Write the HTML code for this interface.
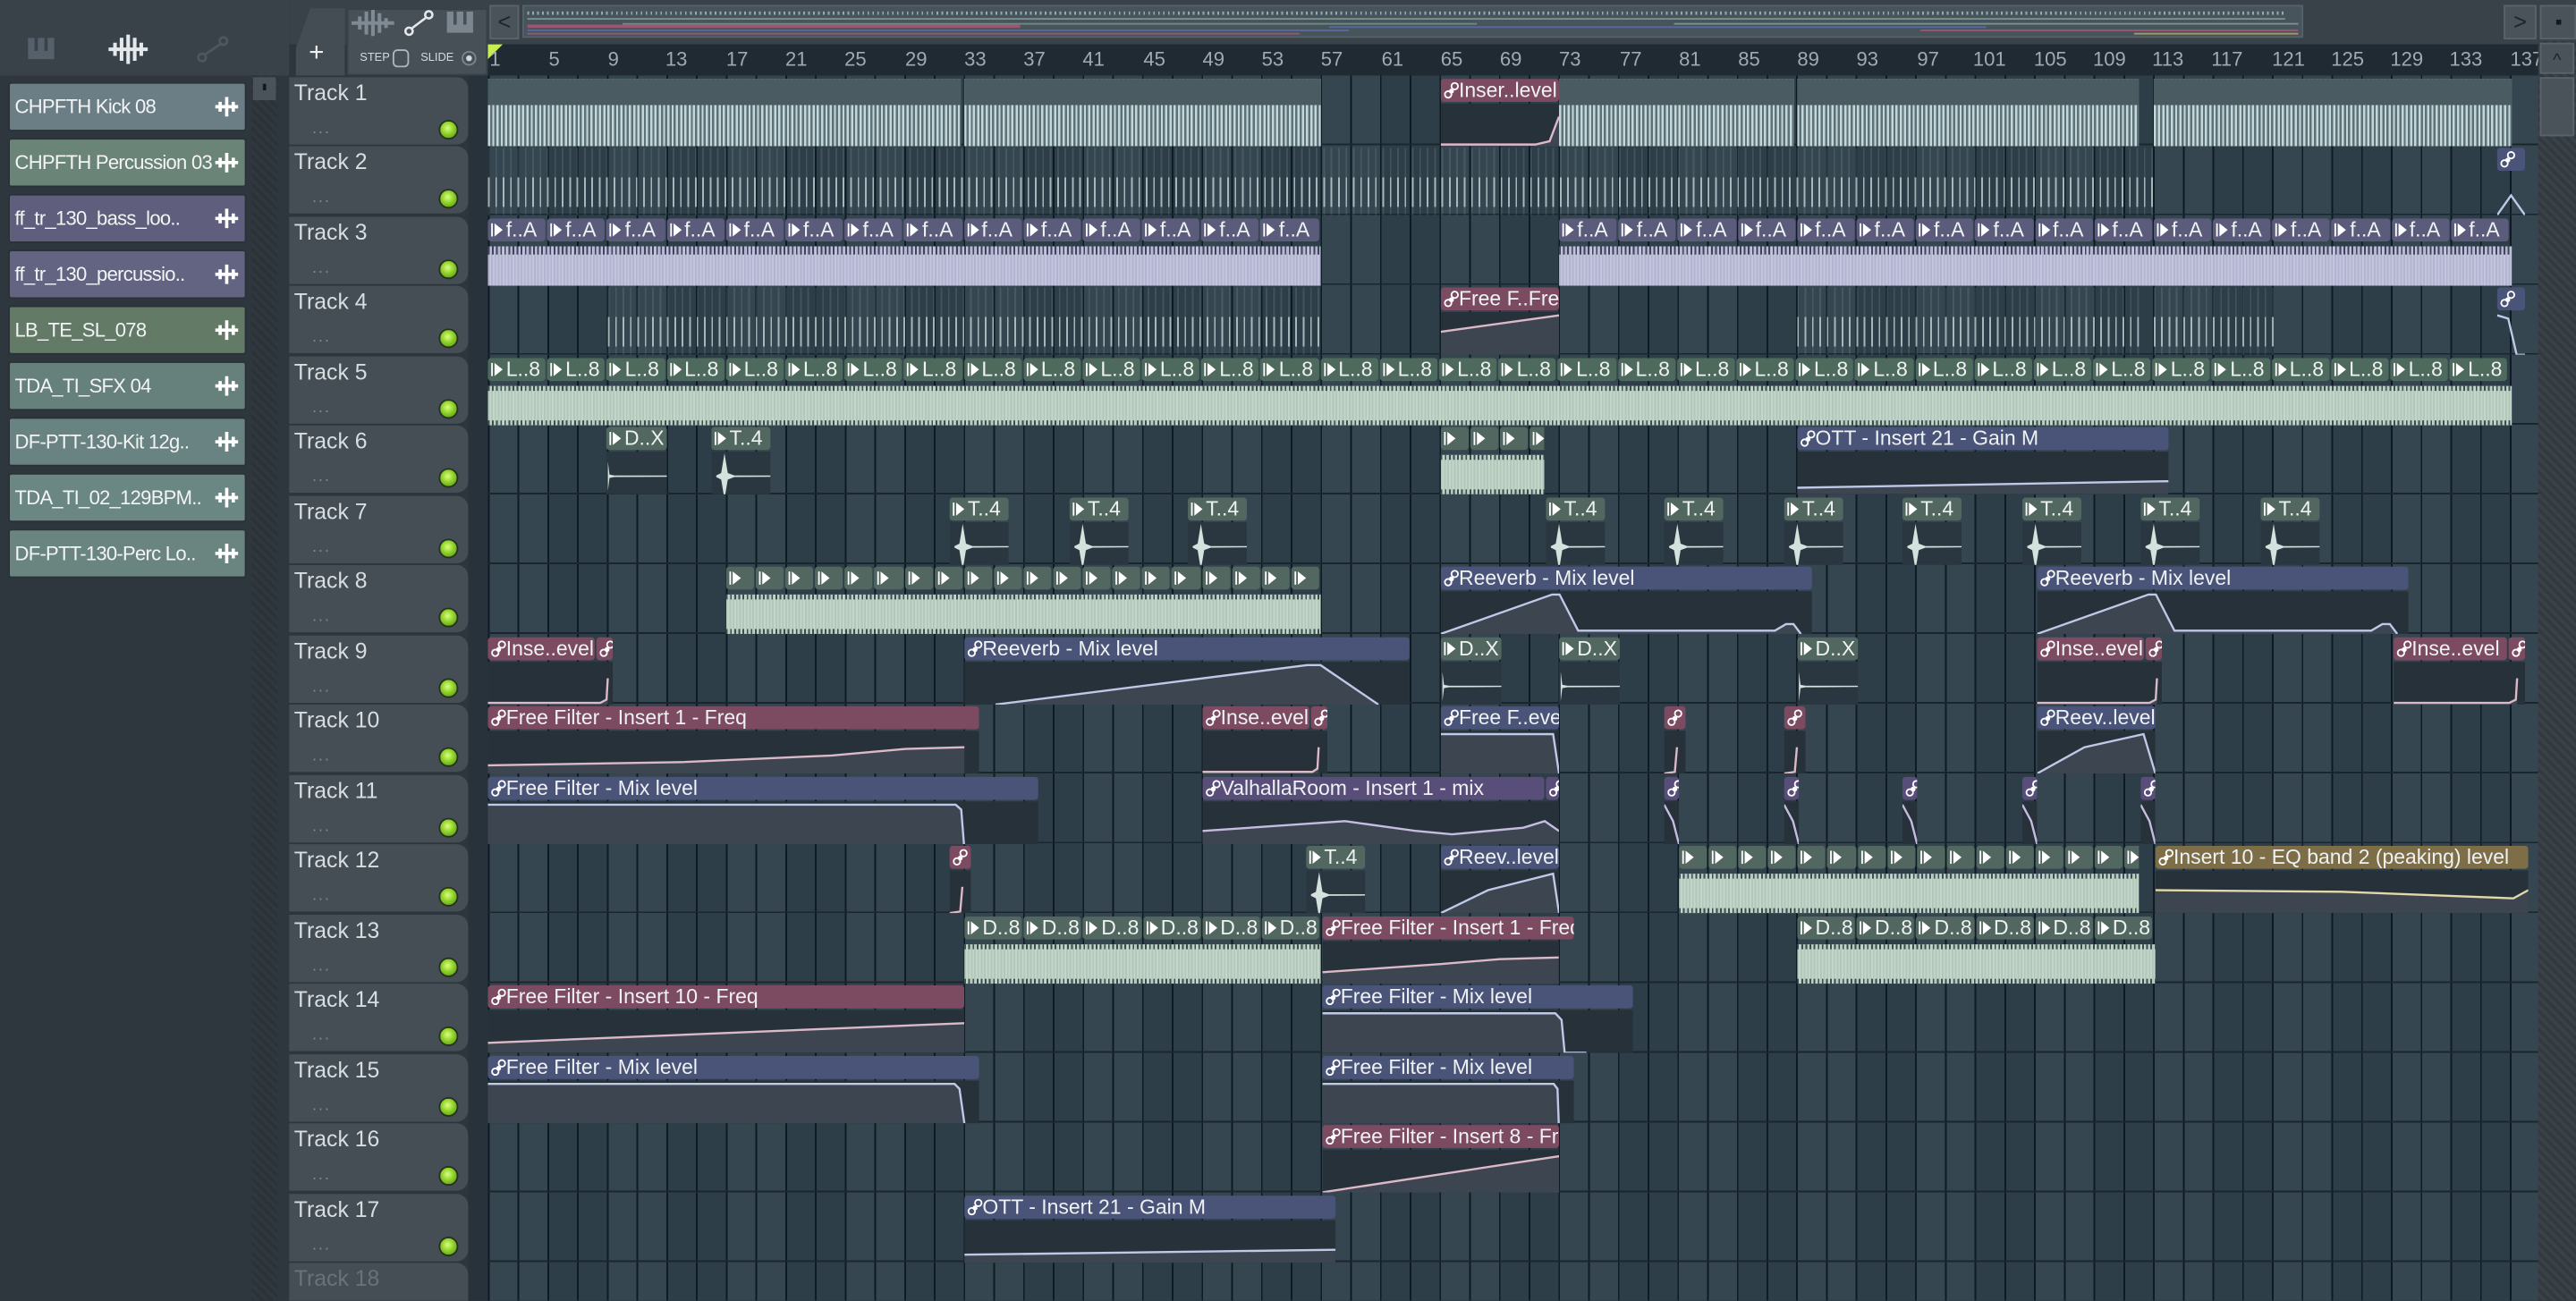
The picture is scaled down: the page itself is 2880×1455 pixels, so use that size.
<!DOCTYPE html>
<html><head><meta charset="utf-8">
<style>
html,body{margin:0;padding:0;width:2880px;height:1454px;overflow:hidden;background:#2e363d}
#s{position:absolute;left:0;top:0;width:1568px;height:792px;transform:scale(1.8367);transform-origin:0 0;overflow:hidden;background:#2e363d;font-family:"Liberation Sans Narrow","Liberation Sans",sans-serif}
.ab{position:absolute}
.grid{position:absolute;left:297px;top:46px;width:1248px;height:746px;
background:
repeating-linear-gradient(to bottom,transparent 0 41.5px,#1a252e 41.5px 42.5px),
repeating-linear-gradient(to right,#0f1b24 0 1px,transparent 1px 18.1px),
repeating-linear-gradient(to right,#354651 0 36.2px,#2e3e49 36.2px 72.4px);}
.c{position:absolute;height:41px;overflow:hidden}
.hd{position:absolute;left:0;right:0;top:0;height:14px;display:flex;gap:1px}
.hd b{flex:none;height:14px;border-radius:2px;font-weight:normal;color:#eef2f3;font-size:12.5px;line-height:14px;padding-left:11px;position:relative;overflow:hidden;white-space:nowrap;box-sizing:border-box;width:35.2px}
.w b{padding-left:12px}
.t::before{content:"";position:absolute;left:4px;top:3px;border-left:5px solid #fff;border-top:4px solid transparent;border-bottom:4px solid transparent}
.t::after{content:"";position:absolute;left:2px;top:3px;width:1px;height:8px;background:#fff}
.a::before{content:"";position:absolute;left:2px;top:7px;width:3px;height:3px;border:1px solid #fff;border-radius:50%}
.a::after{content:"";position:absolute;left:6px;top:2px;width:3px;height:3px;border:1px solid #fff;border-radius:50%;box-shadow:-2px 3px 0 -1px #fff}
.tl{background:#51675f}.gn{background:#4e6a5c}.pu{background:#5b5c7c}
.pk{background:#7c4b61}.bl{background:#4a5479}.vi{background:#594e79}.ol{background:#7d6e48}
.bd{position:absolute;left:0;top:15px;width:100%;height:26px;background:#27313a}
.f{fill:#3d4650}
.s{fill:none;stroke-width:1.3;vector-effect:non-scaling-stroke}
.sp{stroke:#dcb9c9}.sb{stroke:#bfc8e6}.sv{stroke:#c5bde0}.so{stroke:#e3d9a8}
.wg{position:absolute;left:0;right:0;top:17px;bottom:0;background:repeating-linear-gradient(90deg,#b3c8bb 0 1px,#c2d6ca 1px 2px)}
.wg::before,.wg::after{content:"";position:absolute;left:0;right:0;height:3px;background:repeating-linear-gradient(90deg,#3a4d4f 0 1px,transparent 1px 2.5px)}
.wg::before{top:0}.wg::after{bottom:0}
.wp{position:absolute;left:0;right:0;top:17px;bottom:0;background:repeating-linear-gradient(90deg,#b3b4d0 0 1px,#c3c4dd 1px 2px)}
.wp::before{content:"";position:absolute;left:0;right:0;top:0;height:5px;background:repeating-linear-gradient(90deg,#3e4558 0 1px,transparent 1px 2.5px)}
.os{position:absolute;left:0;top:15px;width:100%;height:26px;background:#2b3740}
.os path{fill:#d3e2dd}
.th{position:absolute;left:176px;width:109px;height:41px;background:#454d55;border-radius:0 7px 7px 0}
.th span{position:absolute;left:3px;top:2px;font-size:13.5px;color:#d8dde0}
.th i{position:absolute;left:14px;top:26px;font-style:normal;font-size:10px;color:#7d878e;letter-spacing:1px}
.th u{position:absolute;left:91px;top:26px;width:10px;height:10px;border-radius:50%;background:radial-gradient(circle at 45% 40%,#d9ff7a 0,#8fd12a 45%,#4d8a12 100%);border:1px solid #26331c}
.li{position:absolute;left:5px;width:145px;height:30px;border-radius:2px;box-sizing:border-box;border:1px solid #2a3137;color:#f2f4f5;font-size:12px;letter-spacing:-0.4px;line-height:28px;padding-left:3px;white-space:nowrap;overflow:hidden}
.li svg{position:absolute;right:4px;top:8px}
.rl{position:absolute;top:29px;font-size:12px;color:#9fabb2}
.k1{position:absolute;height:41px;top:47.5px;overflow:hidden;
background:linear-gradient(#4a5c62 0 16px,transparent 16px),repeating-linear-gradient(90deg,#c3d6d8 0 1.3px,#5c7278 1.3px 2.6px)}
.k2{position:absolute;height:41px;overflow:hidden;
background:repeating-linear-gradient(90deg,rgba(150,175,178,.18) 0 1px,transparent 1px 4.5px)}
.k2::after{content:"";position:absolute;left:0;right:0;top:18px;height:18px;background:repeating-linear-gradient(90deg,rgba(210,224,224,.7) 0 1px,transparent 1px 4.5px)}
</style></head><body><div id="s">

<div class="ab" style="left:0;top:0;width:176px;height:46px;background:#3a4249"></div>
<div class="ab" style="left:0;top:46px;width:176px;height:746px;background:#2f373e"></div>
<svg class="ab" style="left:17px;top:23px" width="18" height="14"><rect x="0" y="0" width="16" height="13" fill="#56606a"/><rect x="4" y="0" width="2" height="8" fill="#3a4249"/><rect x="10" y="0" width="2" height="8" fill="#3a4249"/></svg>
<svg class="ab" style="left:66px;top:21px" width="24" height="18"><path d="M0 9H24M4 5v8M8 2v14M12 0v18M16 2v14M20 5v8" stroke="#e4e8ea" stroke-width="2.2"/></svg>
<svg class="ab" style="left:120px;top:22px" width="20" height="16"><circle cx="3" cy="13" r="2.3" fill="none" stroke="#4e575f" stroke-width="1.5"/><circle cx="16" cy="3" r="2.3" fill="none" stroke="#4e575f" stroke-width="1.5"/><path d="M5 11L14 5" stroke="#4e575f" stroke-width="1.5"/></svg>

<div class="li" style="top:50px;background:#6b7e85">CHPFTH Kick 08<svg width="14" height="12"><path d="M0 6H14M3 3v6M7 0v12M11 3v6" stroke="#fff" stroke-width="2"/></svg></div>
<div class="li" style="top:84px;background:#6a8477">CHPFTH Percussion 03<svg width="14" height="12"><path d="M0 6H14M3 3v6M7 0v12M11 3v6" stroke="#fff" stroke-width="2"/></svg></div>
<div class="li" style="top:118px;background:#5f5f7d">ff_tr_130_bass_loo..<svg width="14" height="12"><path d="M0 6H14M3 3v6M7 0v12M11 3v6" stroke="#fff" stroke-width="2"/></svg></div>
<div class="li" style="top:152px;background:#636382">ff_tr_130_percussio..<svg width="14" height="12"><path d="M0 6H14M3 3v6M7 0v12M11 3v6" stroke="#fff" stroke-width="2"/></svg></div>
<div class="li" style="top:186px;background:#627a66">LB_TE_SL_078<svg width="14" height="12"><path d="M0 6H14M3 3v6M7 0v12M11 3v6" stroke="#fff" stroke-width="2"/></svg></div>
<div class="li" style="top:220px;background:#66807c">TDA_TI_SFX 04<svg width="14" height="12"><path d="M0 6H14M3 3v6M7 0v12M11 3v6" stroke="#fff" stroke-width="2"/></svg></div>
<div class="li" style="top:254px;background:#688381">DF-PTT-130-Kit 12g..<svg width="14" height="12"><path d="M0 6H14M3 3v6M7 0v12M11 3v6" stroke="#fff" stroke-width="2"/></svg></div>
<div class="li" style="top:288px;background:#6a8783">TDA_TI_02_129BPM..<svg width="14" height="12"><path d="M0 6H14M3 3v6M7 0v12M11 3v6" stroke="#fff" stroke-width="2"/></svg></div>
<div class="li" style="top:322px;background:#6a8580">DF-PTT-130-Perc Lo..<svg width="14" height="12"><path d="M0 6H14M3 3v6M7 0v12M11 3v6" stroke="#fff" stroke-width="2"/></svg></div>
<div class="ab" style="left:153px;top:46px;width:16px;height:746px;background:repeating-linear-gradient(45deg,#2b3238 0 2px,#30373d 2px 4px)"></div>
<div class="ab" style="left:154px;top:47px;width:14px;height:14px;background:#4a525a"><div class="ab" style="left:6px;top:4px;width:2px;height:4px;background:#15191c"></div></div>

<div class="ab" style="left:176px;top:0;width:1392px;height:27px;background:#3a4249"></div>
<div class="ab" style="left:180px;top:5px;width:30px;height:41px;background:#444c54;clip-path:polygon(30% 0,100% 0,100% 100%,0 100%,0 60%)"></div>
<div class="ab" style="left:188px;top:24px;font-size:16px;color:#eef1f2;font-family:'Liberation Sans',sans-serif">+</div>
<div class="ab" style="left:211px;top:5px;width:84px;height:39px;background:#474f57;border:1px solid #384047"></div>
<svg class="ab" style="left:214px;top:6px" width="26" height="16"><path d="M0 8H26M5 4v8M9 1v14M13 0v16M17 2v12M21 5v6" stroke="#808a92" stroke-width="2.2"/></svg>
<svg class="ab" style="left:246px;top:6px" width="18" height="16"><circle cx="3" cy="13" r="2.2" fill="none" stroke="#e4e8ea" stroke-width="1.4"/><circle cx="15" cy="3" r="2.2" fill="none" stroke="#e4e8ea" stroke-width="1.4"/><path d="M5 11L13 5" stroke="#e4e8ea" stroke-width="1.4"/></svg>
<svg class="ab" style="left:272px;top:7px" width="16" height="13"><rect width="16" height="13" fill="#7c868e"/><rect x="4" width="2" height="8" fill="#474f57"/><rect x="10" width="2" height="8" fill="#474f57"/></svg>
<div class="ab" style="left:219px;top:32px;font-size:7px;color:#d5dadd;font-family:'Liberation Sans',sans-serif">STEP</div>
<div class="ab" style="left:239px;top:30px;width:8px;height:9px;border:1.3px solid #aeb6bb;border-radius:3px"></div>
<div class="ab" style="left:256px;top:32px;font-size:7px;color:#d5dadd;font-family:'Liberation Sans',sans-serif">SLIDE</div>
<div class="ab" style="left:281px;top:31px;width:7px;height:7px;border:1px solid #7c868e;border-radius:50%;background:radial-gradient(#d5dadd 0 1.5px,transparent 2px)"></div>
<div class="ab" style="left:298px;top:3px;width:18px;height:21px;background:#4a525a;border:1px solid #5a636a;box-sizing:border-box;color:#1e2429;font-size:14px;text-align:center;line-height:19px">&lt;</div>
<div class="ab" style="left:318px;top:3px;width:1084px;height:20px;background:#47545c;border:1px solid #56626a;box-sizing:border-box;overflow:hidden">
<div class="ab" style="left:2px;top:3px;width:1070px;height:2px;background:repeating-linear-gradient(90deg,#98aab0 0 1px,transparent 1px 3px)"></div>
<div class="ab" style="left:2px;top:7px;width:1070px;height:1px;background:#7a9390"></div>
<div class="ab" style="left:60px;top:10px;width:520px;height:1px;background:#6f8a80"></div>
<div class="ab" style="left:2px;top:11px;width:300px;height:2px;background:#9a5673"></div>
<div class="ab" style="left:2px;top:14px;width:500px;height:1px;background:#5b68a0"></div>
<div class="ab" style="left:2px;top:16px;width:470px;height:1px;background:#9a5673"></div>
<div class="ab" style="left:490px;top:12px;width:400px;height:1px;background:#5b68a0"></div>
<div class="ab" style="left:700px;top:10px;width:380px;height:1px;background:#7a9390"></div>
<div class="ab" style="left:850px;top:14px;width:230px;height:1px;background:#9a5673"></div>
<div class="ab" style="left:980px;top:16px;width:100px;height:1px;background:#a89a5a"></div>
</div>
<div class="ab" style="left:1524px;top:3px;width:20px;height:21px;background:#4a525a;border:1px solid #5a636a;box-sizing:border-box;color:#1e2429;font-size:14px;text-align:center;line-height:19px">&gt;</div>
<div class="ab" style="left:1546px;top:3px;width:22px;height:21px;background:#4a525a;border:1px solid #5a636a;box-sizing:border-box"><div class="ab" style="left:9px;top:8px;width:3px;height:3px;background:#15191c"></div></div>

<div class="ab" style="left:297px;top:27px;width:1248px;height:19px;background:#1f2a32"></div>
<div class="ab" style="left:297px;top:27px;border-left:9px solid #c6ef4e;border-bottom:9px solid transparent"></div>
<div class="rl" style="left:298px">1</div><div class="rl" style="left:334px">5</div><div class="rl" style="left:370px">9</div><div class="rl" style="left:405px">13</div><div class="rl" style="left:442px">17</div><div class="rl" style="left:478px">21</div><div class="rl" style="left:514px">25</div><div class="rl" style="left:551px">29</div><div class="rl" style="left:587px">33</div><div class="rl" style="left:623px">37</div><div class="rl" style="left:659px">41</div><div class="rl" style="left:696px">45</div><div class="rl" style="left:732px">49</div><div class="rl" style="left:768px">53</div><div class="rl" style="left:804px">57</div><div class="rl" style="left:841px">61</div><div class="rl" style="left:877px">65</div><div class="rl" style="left:913px">69</div><div class="rl" style="left:949px">73</div><div class="rl" style="left:986px">77</div><div class="rl" style="left:1022px">81</div><div class="rl" style="left:1058px">85</div><div class="rl" style="left:1094px">89</div><div class="rl" style="left:1130px">93</div><div class="rl" style="left:1167px">97</div><div class="rl" style="left:1201px">101</div><div class="rl" style="left:1238px">105</div><div class="rl" style="left:1274px">109</div><div class="rl" style="left:1310px">113</div><div class="rl" style="left:1346px">117</div><div class="rl" style="left:1383px">121</div><div class="rl" style="left:1419px">125</div><div class="rl" style="left:1455px">129</div><div class="rl" style="left:1491px">133</div><div class="rl" style="left:1528px">137</div>

<div class="ab" style="left:1545px;top:25px;width:23px;height:767px;background:repeating-linear-gradient(45deg,#32393f 0 2px,#3a4147 2px 4px)"></div>
<div class="ab" style="left:1546px;top:26px;width:21px;height:19px;background:#4a525a;border:1px solid #5a636a;box-sizing:border-box;color:#1e2429;font-size:11px;text-align:center;line-height:20px">^</div>
<div class="ab" style="left:1546px;top:47px;width:21px;height:36px;background:#4a525a;border:1px solid #5a636a;box-sizing:border-box"></div>

<div class="ab" style="left:285px;top:46px;width:12px;height:746px;background:#27323b"></div>
<div class="grid"></div>

<div class="th" style="top:46.5px"><span>Track 1</span><i>...</i><u></u></div>
<div class="th" style="top:89px"><span>Track 2</span><i>...</i><u></u></div>
<div class="th" style="top:131.5px"><span>Track 3</span><i>...</i><u></u></div>
<div class="th" style="top:174px"><span>Track 4</span><i>...</i><u></u></div>
<div class="th" style="top:216.5px"><span>Track 5</span><i>...</i><u></u></div>
<div class="th" style="top:259px"><span>Track 6</span><i>...</i><u></u></div>
<div class="th" style="top:301.5px"><span>Track 7</span><i>...</i><u></u></div>
<div class="th" style="top:344px"><span>Track 8</span><i>...</i><u></u></div>
<div class="th" style="top:386.5px"><span>Track 9</span><i>...</i><u></u></div>
<div class="th" style="top:429px"><span>Track 10</span><i>...</i><u></u></div>
<div class="th" style="top:471.5px"><span>Track 11</span><i>...</i><u></u></div>
<div class="th" style="top:514px"><span>Track 12</span><i>...</i><u></u></div>
<div class="th" style="top:556.5px"><span>Track 13</span><i>...</i><u></u></div>
<div class="th" style="top:599px"><span>Track 14</span><i>...</i><u></u></div>
<div class="th" style="top:641.5px"><span>Track 15</span><i>...</i><u></u></div>
<div class="th" style="top:684px"><span>Track 16</span><i>...</i><u></u></div>
<div class="th" style="top:726.5px"><span>Track 17</span><i>...</i><u></u></div>
<div class="th" style="top:769px"><span style="color:#68727a">Track 18</span></div>

<div class="k1" style="left:297px;width:288px"></div>
<div class="k1" style="left:587px;width:217px"></div>
<div class="k1" style="left:949px;width:143px"></div>
<div class="k1" style="left:1094px;width:208px"></div>
<div class="k1" style="left:1311px;width:218px"></div>
<div class="c" style="left:877px;top:47.5px;width:72px"><div class="hd"><b class="a pk" style="flex:1">Inser..level</b></div><svg class="bd" viewBox="0 0 100 26" preserveAspectRatio="none"><polygon class="f" points="0,26 0,25 80,25 92,23 100,8 100,26"/><polyline class="s sp" points="0,25 80,25 92,23 100,8"/></svg></div>

<div class="k2" style="left:297px;top:90px;width:1014px"></div>
<div class="c" style="left:1520px;top:90px;width:17px"><div class="hd"><b class="a bl" style="flex:1"></b></div><svg class="bd" viewBox="0 0 100 26" preserveAspectRatio="none" style="background:transparent"><polyline class="s sb" points="0,26 50,14 100,26"/></svg></div>

<div class="c" style="left:297px;top:132.5px;width:507px"><div class="hd"><b class="t pu">f..A</b><b class="t pu">f..A</b><b class="t pu">f..A</b><b class="t pu">f..A</b><b class="t pu">f..A</b><b class="t pu">f..A</b><b class="t pu">f..A</b><b class="t pu">f..A</b><b class="t pu">f..A</b><b class="t pu">f..A</b><b class="t pu">f..A</b><b class="t pu">f..A</b><b class="t pu">f..A</b><b class="t pu">f..A</b></div><div class="wp"></div></div>
<div class="c" style="left:949px;top:132.5px;width:580px"><div class="hd"><b class="t pu">f..A</b><b class="t pu">f..A</b><b class="t pu">f..A</b><b class="t pu">f..A</b><b class="t pu">f..A</b><b class="t pu">f..A</b><b class="t pu">f..A</b><b class="t pu">f..A</b><b class="t pu">f..A</b><b class="t pu">f..A</b><b class="t pu">f..A</b><b class="t pu">f..A</b><b class="t pu">f..A</b><b class="t pu">f..A</b><b class="t pu">f..A</b><b class="t pu">f..A</b></div><div class="wp"></div></div>

<div class="k2" style="left:370px;top:175px;width:434px"></div>
<div class="k2" style="left:1094px;top:175px;width:208px"></div>
<div class="k2" style="left:1311px;top:175px;width:73px"></div>
<div class="c" style="left:877px;top:175px;width:72px"><div class="hd"><b class="a pk" style="flex:1">Free F..Freq</b></div><svg class="bd" viewBox="0 0 100 26" preserveAspectRatio="none"><polygon class="f" points="0,26 0,12 100,2 100,26"/><polyline class="s sp" points="0,12 100,2"/></svg></div>
<div class="c" style="left:1520px;top:175px;width:17px"><div class="hd"><b class="a bl" style="flex:1"></b></div><svg class="bd" viewBox="0 0 100 26" preserveAspectRatio="none" style="background:transparent"><polyline class="s sb" points="0,2 40,4 70,26 100,26"/></svg></div>

<div class="c" style="left:297px;top:217.5px;width:1232px"><div class="hd"><b class="t gn">L..8</b><b class="t gn">L..8</b><b class="t gn">L..8</b><b class="t gn">L..8</b><b class="t gn">L..8</b><b class="t gn">L..8</b><b class="t gn">L..8</b><b class="t gn">L..8</b><b class="t gn">L..8</b><b class="t gn">L..8</b><b class="t gn">L..8</b><b class="t gn">L..8</b><b class="t gn">L..8</b><b class="t gn">L..8</b><b class="t gn">L..8</b><b class="t gn">L..8</b><b class="t gn">L..8</b><b class="t gn">L..8</b><b class="t gn">L..8</b><b class="t gn">L..8</b><b class="t gn">L..8</b><b class="t gn">L..8</b><b class="t gn">L..8</b><b class="t gn">L..8</b><b class="t gn">L..8</b><b class="t gn">L..8</b><b class="t gn">L..8</b><b class="t gn">L..8</b><b class="t gn">L..8</b><b class="t gn">L..8</b><b class="t gn">L..8</b><b class="t gn">L..8</b><b class="t gn">L..8</b><b class="t gn">L..8</b></div><div class="wg"></div></div>

<div class="c" style="left:369px;top:260px;width:37px"><div class="hd"><b class="t tl" style="flex:1">D..X</b></div><svg class="os" viewBox="0 0 37 26" preserveAspectRatio="none"><path d="M1 6L2 14L5 14.5L37 14.5L37 15.3L5 15.5L2 16L1 24Z"/></svg></div>
<div class="c" style="left:433px;top:260px;width:36px"><div class="hd"><b class="t tl" style="flex:1">T..4</b></div><svg class="os" viewBox="0 0 36 26" preserveAspectRatio="none"><path d="M3 14.5L6 13L8 1L10 13L14 14.5L36 14.5L36 15.3L14 15.5L10 17L8 29L6 17L3 15.5Z"/></svg></div>
<div class="c" style="left:877px;top:260px;width:63px"><div class="hd w"><b class="t tl" style="width:17.1px"></b><b class="t tl" style="width:17.1px"></b><b class="t tl" style="width:17.1px"></b><b class="t tl" style="width:9px"></b></div><div class="wg"></div></div>
<div class="c" style="left:1094px;top:260px;width:226px"><div class="hd"><b class="a bl" style="flex:1">OTT - Insert 21 - Gain M</b></div><svg class="bd" viewBox="0 0 100 26" preserveAspectRatio="none"><polygon class="f" points="0,26 0,22 100,18 100,26"/><polyline class="s sb" points="0,22 100,18"/></svg></div>

<div class="c" style="left:578px;top:302.5px;width:36px"><div class="hd"><b class="t tl" style="flex:1">T..4</b></div><svg class="os" viewBox="0 0 36 26" preserveAspectRatio="none"><path d="M3 14.5L6 13L8 1L10 13L14 14.5L36 14.5L36 15.3L14 15.5L10 17L8 29L6 17L3 15.5Z"/></svg></div>
<div class="c" style="left:651px;top:302.5px;width:36px"><div class="hd"><b class="t tl" style="flex:1">T..4</b></div><svg class="os" viewBox="0 0 36 26" preserveAspectRatio="none"><path d="M3 14.5L6 13L8 1L10 13L14 14.5L36 14.5L36 15.3L14 15.5L10 17L8 29L6 17L3 15.5Z"/></svg></div>
<div class="c" style="left:723px;top:302.5px;width:36px"><div class="hd"><b class="t tl" style="flex:1">T..4</b></div><svg class="os" viewBox="0 0 36 26" preserveAspectRatio="none"><path d="M3 14.5L6 13L8 1L10 13L14 14.5L36 14.5L36 15.3L14 15.5L10 17L8 29L6 17L3 15.5Z"/></svg></div>
<div class="c" style="left:941px;top:302.5px;width:36px"><div class="hd"><b class="t tl" style="flex:1">T..4</b></div><svg class="os" viewBox="0 0 36 26" preserveAspectRatio="none"><path d="M3 14.5L6 13L8 1L10 13L14 14.5L36 14.5L36 15.3L14 15.5L10 17L8 29L6 17L3 15.5Z"/></svg></div>
<div class="c" style="left:1013px;top:302.5px;width:36px"><div class="hd"><b class="t tl" style="flex:1">T..4</b></div><svg class="os" viewBox="0 0 36 26" preserveAspectRatio="none"><path d="M3 14.5L6 13L8 1L10 13L14 14.5L36 14.5L36 15.3L14 15.5L10 17L8 29L6 17L3 15.5Z"/></svg></div>
<div class="c" style="left:1086px;top:302.5px;width:36px"><div class="hd"><b class="t tl" style="flex:1">T..4</b></div><svg class="os" viewBox="0 0 36 26" preserveAspectRatio="none"><path d="M3 14.5L6 13L8 1L10 13L14 14.5L36 14.5L36 15.3L14 15.5L10 17L8 29L6 17L3 15.5Z"/></svg></div>
<div class="c" style="left:1158px;top:302.5px;width:36px"><div class="hd"><b class="t tl" style="flex:1">T..4</b></div><svg class="os" viewBox="0 0 36 26" preserveAspectRatio="none"><path d="M3 14.5L6 13L8 1L10 13L14 14.5L36 14.5L36 15.3L14 15.5L10 17L8 29L6 17L3 15.5Z"/></svg></div>
<div class="c" style="left:1231px;top:302.5px;width:36px"><div class="hd"><b class="t tl" style="flex:1">T..4</b></div><svg class="os" viewBox="0 0 36 26" preserveAspectRatio="none"><path d="M3 14.5L6 13L8 1L10 13L14 14.5L36 14.5L36 15.3L14 15.5L10 17L8 29L6 17L3 15.5Z"/></svg></div>
<div class="c" style="left:1303px;top:302.5px;width:36px"><div class="hd"><b class="t tl" style="flex:1">T..4</b></div><svg class="os" viewBox="0 0 36 26" preserveAspectRatio="none"><path d="M3 14.5L6 13L8 1L10 13L14 14.5L36 14.5L36 15.3L14 15.5L10 17L8 29L6 17L3 15.5Z"/></svg></div>
<div class="c" style="left:1376px;top:302.5px;width:36px"><div class="hd"><b class="t tl" style="flex:1">T..4</b></div><svg class="os" viewBox="0 0 36 26" preserveAspectRatio="none"><path d="M3 14.5L6 13L8 1L10 13L14 14.5L36 14.5L36 15.3L14 15.5L10 17L8 29L6 17L3 15.5Z"/></svg></div>

<div class="c" style="left:442px;top:345px;width:362px"><div class="hd w"><b class="t tl" style="width:17.1px"></b><b class="t tl" style="width:17.1px"></b><b class="t tl" style="width:17.1px"></b><b class="t tl" style="width:17.1px"></b><b class="t tl" style="width:17.1px"></b><b class="t tl" style="width:17.1px"></b><b class="t tl" style="width:17.1px"></b><b class="t tl" style="width:17.1px"></b><b class="t tl" style="width:17.1px"></b><b class="t tl" style="width:17.1px"></b><b class="t tl" style="width:17.1px"></b><b class="t tl" style="width:17.1px"></b><b class="t tl" style="width:17.1px"></b><b class="t tl" style="width:17.1px"></b><b class="t tl" style="width:17.1px"></b><b class="t tl" style="width:17.1px"></b><b class="t tl" style="width:17.1px"></b><b class="t tl" style="width:17.1px"></b><b class="t tl" style="width:17.1px"></b><b class="t tl" style="width:17.1px"></b></div><div class="wg"></div></div>
<div class="c" style="left:877px;top:345px;width:226px"><div class="hd"><b class="a bl" style="flex:1">Reeverb - Mix level</b></div><svg class="bd" viewBox="0 0 100 26" preserveAspectRatio="none"><polygon class="f" points="0,26 30,2 32,2 37,24 90,24 93,20 95,20 97,26"/><polyline class="s sb" points="0,26 30,2 32,2 37,24 90,24 93,20 95,20 97,26"/></svg></div>
<div class="c" style="left:1240px;top:345px;width:226px"><div class="hd"><b class="a bl" style="flex:1">Reeverb - Mix level</b></div><svg class="bd" viewBox="0 0 100 26" preserveAspectRatio="none"><polygon class="f" points="0,26 30,2 32,2 37,24 90,24 93,20 95,20 97,26"/><polyline class="s sb" points="0,26 30,2 32,2 37,24 90,24 93,20 95,20 97,26"/></svg></div>

<div class="c" style="left:297px;top:387.5px;width:76px"><div class="hd"><b class="a pk" style="flex:1">Inse..evel</b><b class="a pk" style="width:10px;padding:0"></b></div><svg class="bd" viewBox="0 0 100 26" preserveAspectRatio="none"><polygon class="f" points="0,26 0,25 90,25 95,23 96,10 96,26"/><polyline class="s sp" points="0,25 90,25 95,23 96,10"/></svg></div>
<div class="c" style="left:587px;top:387.5px;width:271px"><div class="hd"><b class="a bl" style="flex:1">Reeverb - Mix level</b></div><svg class="bd" viewBox="0 0 100 26" preserveAspectRatio="none"><polygon class="f" points="7,26 77,2 80,2 93,26"/><polyline class="s sb" points="7,26 77,2 80,2 93,26"/></svg></div>
<div class="c" style="left:877px;top:387.5px;width:37px"><div class="hd"><b class="t tl" style="flex:1">D..X</b></div><svg class="os" viewBox="0 0 37 26" preserveAspectRatio="none"><path d="M1 6L2 14L5 14.5L37 14.5L37 15.3L5 15.5L2 16L1 24Z"/></svg></div>
<div class="c" style="left:949px;top:387.5px;width:37px"><div class="hd"><b class="t tl" style="flex:1">D..X</b></div><svg class="os" viewBox="0 0 37 26" preserveAspectRatio="none"><path d="M1 6L2 14L5 14.5L37 14.5L37 15.3L5 15.5L2 16L1 24Z"/></svg></div>
<div class="c" style="left:1094px;top:387.5px;width:37px"><div class="hd"><b class="t tl" style="flex:1">D..X</b></div><svg class="os" viewBox="0 0 37 26" preserveAspectRatio="none"><path d="M1 6L2 14L5 14.5L37 14.5L37 15.3L5 15.5L2 16L1 24Z"/></svg></div>
<div class="c" style="left:1240px;top:387.5px;width:76px"><div class="hd"><b class="a pk" style="flex:1">Inse..evel</b><b class="a pk" style="width:10px;padding:0"></b></div><svg class="bd" viewBox="0 0 100 26" preserveAspectRatio="none"><polygon class="f" points="0,26 0,25 90,25 95,23 96,10 96,26"/><polyline class="s sp" points="0,25 90,25 95,23 96,10"/></svg></div>
<div class="c" style="left:1457px;top:387.5px;width:80px"><div class="hd"><b class="a pk" style="flex:1">Inse..evel</b><b class="a pk" style="width:10px;padding:0"></b></div><svg class="bd" viewBox="0 0 100 26" preserveAspectRatio="none"><polygon class="f" points="0,26 0,25 88,25 93,23 94,10 94,26"/><polyline class="s sp" points="0,25 88,25 93,23 94,10"/></svg></div>

<div class="c" style="left:297px;top:430px;width:299px"><div class="hd"><b class="a pk" style="flex:1">Free Filter - Insert 1 - Freq</b></div><svg class="bd" viewBox="0 0 100 26" preserveAspectRatio="none"><polygon class="f" points="0,26 0,21 40,19 70,15 85,11 97,10 97,26"/><polyline class="s sp" points="0,21 40,19 70,15 85,11 97,10"/></svg></div>
<div class="c" style="left:732px;top:430px;width:76px"><div class="hd"><b class="a pk" style="flex:1">Inse..evel</b><b class="a pk" style="width:10px;padding:0"></b></div><svg class="bd" viewBox="0 0 100 26" preserveAspectRatio="none"><polygon class="f" points="0,26 0,25 88,25 92,23 93,10 93,26"/><polyline class="s sp" points="0,25 88,25 92,23 93,10"/></svg></div>
<div class="c" style="left:877px;top:430px;width:72px"><div class="hd"><b class="a bl" style="flex:1">Free F..evel</b></div><svg class="bd" viewBox="0 0 100 26" preserveAspectRatio="none"><polygon class="f" points="0,26 0,2 95,2 100,26"/><polyline class="s sb" points="0,2 95,2 100,26"/></svg></div>
<div class="c" style="left:1013px;top:430px;width:13px"><div class="hd"><b class="a pk" style="flex:1;padding:0"></b></div><svg class="bd" viewBox="0 0 100 26" preserveAspectRatio="none"><polyline class="s sp" points="0,26 50,25 60,10"/></svg></div>
<div class="c" style="left:1086px;top:430px;width:13px"><div class="hd"><b class="a pk" style="flex:1;padding:0"></b></div><svg class="bd" viewBox="0 0 100 26" preserveAspectRatio="none"><polyline class="s sp" points="0,26 50,25 60,10"/></svg></div>
<div class="c" style="left:1240px;top:430px;width:72px"><div class="hd"><b class="a bl" style="flex:1">Reev..level</b></div><svg class="bd" viewBox="0 0 100 26" preserveAspectRatio="none"><polygon class="f" points="0,26 40,10 90,2 100,26"/><polyline class="s sb" points="0,26 40,10 90,2 100,26"/></svg></div>

<div class="c" style="left:297px;top:472.5px;width:335px"><div class="hd"><b class="a bl" style="flex:1">Free Filter - Mix level</b></div><svg class="bd" viewBox="0 0 100 26" preserveAspectRatio="none"><polygon class="f" points="0,26 0,2 85,2 86,5 86.5,26"/><polyline class="s sb" points="0,2 85,2 86,5 86.5,26"/></svg></div>
<div class="c" style="left:732px;top:472.5px;width:217px"><div class="hd"><b class="a vi" style="flex:1">ValhallaRoom - Insert 1 - mix</b><b class="a vi" style="width:8px;padding:0"></b></div><svg class="bd" viewBox="0 0 100 26" preserveAspectRatio="none"><polygon class="f" points="0,26 0,18 40,12 60,18 70,20 90,16 96,12 100,18 100,26"/><polyline class="s sv" points="0,18 40,12 60,18 70,20 90,16 96,12 100,18"/></svg></div>
<div class="c" style="left:1013px;top:472.5px;width:9px"><div class="hd"><b class="a vi" style="flex:1;padding:0"></b></div><svg class="bd" viewBox="0 0 100 26" preserveAspectRatio="none"><polyline class="s sv" points="0,2 60,12 100,26"/></svg></div>
<div class="c" style="left:1086px;top:472.5px;width:9px"><div class="hd"><b class="a vi" style="flex:1;padding:0"></b></div><svg class="bd" viewBox="0 0 100 26" preserveAspectRatio="none"><polyline class="s sv" points="0,2 60,12 100,26"/></svg></div>
<div class="c" style="left:1158px;top:472.5px;width:9px"><div class="hd"><b class="a vi" style="flex:1;padding:0"></b></div><svg class="bd" viewBox="0 0 100 26" preserveAspectRatio="none"><polyline class="s sv" points="0,2 60,12 100,26"/></svg></div>
<div class="c" style="left:1231px;top:472.5px;width:9px"><div class="hd"><b class="a vi" style="flex:1;padding:0"></b></div><svg class="bd" viewBox="0 0 100 26" preserveAspectRatio="none"><polyline class="s sv" points="0,2 60,12 100,26"/></svg></div>
<div class="c" style="left:1303px;top:472.5px;width:9px"><div class="hd"><b class="a vi" style="flex:1;padding:0"></b></div><svg class="bd" viewBox="0 0 100 26" preserveAspectRatio="none"><polyline class="s sv" points="0,2 60,12 100,26"/></svg></div>

<div class="c" style="left:578px;top:515px;width:13px"><div class="hd"><b class="a pk" style="flex:1;padding:0"></b></div><svg class="bd" viewBox="0 0 100 26" preserveAspectRatio="none"><polyline class="s sp" points="0,26 50,25 60,10"/></svg></div>
<div class="c" style="left:795px;top:515px;width:36px"><div class="hd"><b class="t tl" style="flex:1">T..4</b></div><svg class="os" viewBox="0 0 36 26" preserveAspectRatio="none"><path d="M3 14.5L6 13L8 1L10 13L14 14.5L36 14.5L36 15.3L14 15.5L10 17L8 29L6 17L3 15.5Z"/></svg></div>
<div class="c" style="left:877px;top:515px;width:72px"><div class="hd"><b class="a bl" style="flex:1">Reev..level</b></div><svg class="bd" viewBox="0 0 100 26" preserveAspectRatio="none"><polygon class="f" points="0,26 40,12 95,2 100,26"/><polyline class="s sb" points="0,26 40,12 95,2 100,26"/></svg></div>
<div class="c" style="left:1022px;top:515px;width:280px"><div class="hd w"><b class="t tl" style="width:17.1px"></b><b class="t tl" style="width:17.1px"></b><b class="t tl" style="width:17.1px"></b><b class="t tl" style="width:17.1px"></b><b class="t tl" style="width:17.1px"></b><b class="t tl" style="width:17.1px"></b><b class="t tl" style="width:17.1px"></b><b class="t tl" style="width:17.1px"></b><b class="t tl" style="width:17.1px"></b><b class="t tl" style="width:17.1px"></b><b class="t tl" style="width:17.1px"></b><b class="t tl" style="width:17.1px"></b><b class="t tl" style="width:17.1px"></b><b class="t tl" style="width:17.1px"></b><b class="t tl" style="width:17.1px"></b><b class="t tl" style="width:8px"></b></div><div class="wg"></div></div>
<div class="c" style="left:1312px;top:515px;width:227px"><div class="hd"><b class="a ol" style="flex:1">Insert 10 - EQ band 2 (peaking) level</b></div><svg class="bd" viewBox="0 0 100 26" preserveAspectRatio="none"><polygon class="f" points="0,26 0,12 50,13 96,17 100,12 100,26"/><polyline class="s so" points="0,12 50,13 96,17 100,12"/></svg></div>

<div class="c" style="left:587px;top:557.5px;width:217px"><div class="hd"><b class="t tl">D..8</b><b class="t tl">D..8</b><b class="t tl">D..8</b><b class="t tl">D..8</b><b class="t tl">D..8</b><b class="t tl">D..8</b></div><div class="wg"></div></div>
<div class="c" style="left:805px;top:557.5px;width:153px"><div class="hd"><b class="a pk" style="flex:1">Free Filter - Insert 1 - Freq</b></div><svg class="bd" viewBox="0 0 100 26" preserveAspectRatio="none" style="width:94%"><polygon class="f" points="0,26 0,19 50,14 75,11 100,10 100,26"/><polyline class="s sp" points="0,19 50,14 75,11 100,10"/></svg></div>
<div class="c" style="left:1094px;top:557.5px;width:218px"><div class="hd"><b class="t tl">D..8</b><b class="t tl">D..8</b><b class="t tl">D..8</b><b class="t tl">D..8</b><b class="t tl">D..8</b><b class="t tl">D..8</b></div><div class="wg"></div></div>

<div class="c" style="left:297px;top:600px;width:290px"><div class="hd"><b class="a pk" style="flex:1">Free Filter - Insert 10 - Freq</b></div><svg class="bd" viewBox="0 0 100 26" preserveAspectRatio="none"><polygon class="f" points="0,26 0,20 100,8 100,26"/><polyline class="s sp" points="0,20 100,8"/></svg></div>
<div class="c" style="left:805px;top:600px;width:189px"><div class="hd"><b class="a bl" style="flex:1">Free Filter - Mix level</b></div><svg class="bd" viewBox="0 0 100 26" preserveAspectRatio="none"><polygon class="f" points="0,26 0,2 75,2 77,6 78,26"/><polyline class="s sb" points="0,2 75,2 77,6 78,26 85,26"/></svg></div>

<div class="c" style="left:297px;top:642.5px;width:299px"><div class="hd"><b class="a bl" style="flex:1">Free Filter - Mix level</b></div><svg class="bd" viewBox="0 0 100 26" preserveAspectRatio="none"><polygon class="f" points="0,26 0,2 95,2 96,5 97,26"/><polyline class="s sb" points="0,2 95,2 96,5 97,26"/></svg></div>
<div class="c" style="left:805px;top:642.5px;width:153px"><div class="hd"><b class="a bl" style="flex:1">Free Filter - Mix level</b></div><svg class="bd" viewBox="0 0 100 26" preserveAspectRatio="none"><polygon class="f" points="0,26 0,2 92,2 93.5,5 94,26"/><polyline class="s sb" points="0,2 92,2 93.5,5 94,26"/></svg></div>

<div class="c" style="left:805px;top:685px;width:144px"><div class="hd"><b class="a pk" style="flex:1">Free Filter - Insert 8 - Freq</b></div><svg class="bd" viewBox="0 0 100 26" preserveAspectRatio="none"><polygon class="f" points="0,26 100,4 100,26"/><polyline class="s sp" points="0,26 100,4"/></svg></div>

<div class="c" style="left:587px;top:727.5px;width:226px"><div class="hd"><b class="a bl" style="flex:1">OTT - Insert 21 - Gain M</b></div><svg class="bd" viewBox="0 0 100 26" preserveAspectRatio="none"><polygon class="f" points="0,26 0,21 100,18 100,26"/><polyline class="s sb" points="0,21 100,18"/></svg></div>

</div></body></html>
